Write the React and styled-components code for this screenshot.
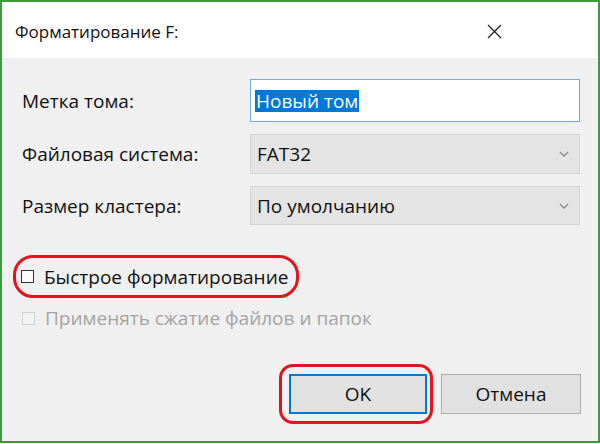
import React from 'react'
import styled, { createGlobalStyle } from 'styled-components'

const Global = createGlobalStyle`
  html, body { margin: 0; padding: 0; background: #ffffff; }
  body { font-family: "Open Sans", "Noto Sans", sans-serif; }
`

const Window = styled.div`
  box-sizing: border-box;
  width: 600px;
  height: 443px;
  border: 2px solid #3d9a3d;
  display: flex;
  flex-direction: column;
  background: #f0f0f0;
`

const TitleBar = styled.div`
  height: 56px;
  background: #ffffff;
  display: flex;
  align-items: center;
  justify-content: space-between;
  padding: 0 96px 0 13px;
`

const Title = styled.span`
  font-size: 17px;
  line-height: 22px;
  color: #111;
  margin-top: 4px;
`

const Close = styled.span`
  display: flex;
  margin-top: 2px;
`

const Body = styled.div`
  flex: 1;
  display: flex;
  flex-direction: column;
  padding: 21px 16px 0 20px;
`

const Form = styled.div`
  display: grid;
  grid-template-columns: 228px 330px;
  row-gap: 12px;
  align-items: center;
`

const Label = styled.span`
  font-size: 19px;
  line-height: 22px;
  color: #111;
`

const TextBox = styled.div`
  box-sizing: border-box;
  height: 43px;
  border: 1px solid #7aa9d8;
  background: #fff;
  display: flex;
  align-items: center;
  padding-left: 4px;
`

const Selected = styled.span`
  background: #0078d7;
  color: #fff;
  font-size: 19px;
  line-height: 22px;
  padding: 0 1px;
`

const Combo = styled.div`
  box-sizing: border-box;
  height: ${p => p.$h}px;
  border: 1px solid #d4d4d4;
  background: #e4e4e4;
  display: flex;
  align-items: center;
  justify-content: space-between;
  padding: 0 10px 0 6px;
  font-size: 19px;
  line-height: 22px;
  color: #111;
`

const Options = styled.div`
  display: flex;
  flex-direction: column;
  align-items: flex-start;
  margin-top: 30px;
  gap: 9px;
`

const Highlight = styled.div`
  border: 3px solid #e4141e;
  border-radius: 20px;
  height: 37px;
  display: flex;
  align-items: center;
  padding: 0 8px 0 5px;
  margin-left: -9px;
`

const Check = styled.label`
  display: flex;
  align-items: center;
  gap: 10px;
  font-size: 19px;
  line-height: 22px;
  color: ${p => (p.$disabled ? '#a3a3a3' : '#111')};
`

const Box = styled.span`
  box-sizing: border-box;
  width: 13px;
  height: 13px;
  border: 1px solid ${p => (p.$disabled ? '#d0d0d0' : '#333')};
  background: ${p => (p.$disabled ? '#f3f3f3' : '#fff')};
`

const Buttons = styled.div`
  display: flex;
  justify-content: flex-end;
  align-items: center;
  margin-top: 35px;
  gap: 8px;
  padding-right: 1px;
`

const Ring = styled.div`
  border: 3px solid #e4141e;
  border-radius: 14px;
  padding: 7px 3px 7px 7px;
  display: flex;
`

const Button = styled.button`
  box-sizing: border-box;
  width: ${p => p.$w}px;
  height: 40px;
  background: #e1e1e1;
  border: ${p => (p.$primary ? '2px solid #0078d7' : '1px solid #adadad')};
  font-family: inherit;
  font-size: 19px;
  color: #111;
  padding: 0;
`

const Chevron = () => (
  <svg width="10" height="6" viewBox="0 0 10 6">
    <path d="M1 1l4 4 4-4" fill="none" stroke="#8a8a8a" strokeWidth="1.4" />
  </svg>
)

export default function App() {
  return (
    <>
      <Global />
      <Window>
        <TitleBar>
          <Title>Форматирование F:</Title>
          <Close>
            <svg width="15" height="15" viewBox="0 0 15 15">
              <path d="M1 1l13 13M14 1L1 14" stroke="#222" strokeWidth="1.3" />
            </svg>
          </Close>
        </TitleBar>
        <Body>
          <Form>
            <Label>Метка тома:</Label>
            <TextBox>
              <Selected>Новый том</Selected>
            </TextBox>
            <Label>Файловая система:</Label>
            <Combo $h={40}>
              FAT32
              <Chevron />
            </Combo>
            <Label>Размер кластера:</Label>
            <Combo $h={39}>
              По умолчанию
              <Chevron />
            </Combo>
          </Form>
          <Options>
            <Highlight>
              <Check>
                <Box />
                Быстрое форматирование
              </Check>
            </Highlight>
            <Check $disabled>
              <Box $disabled />
              Применять сжатие файлов и папок
            </Check>
          </Options>
          <Buttons>
            <Ring>
              <Button $primary $w={138}>OK</Button>
            </Ring>
            <Button $w={140}>Отмена</Button>
          </Buttons>
        </Body>
      </Window>
    </>
  )
}
